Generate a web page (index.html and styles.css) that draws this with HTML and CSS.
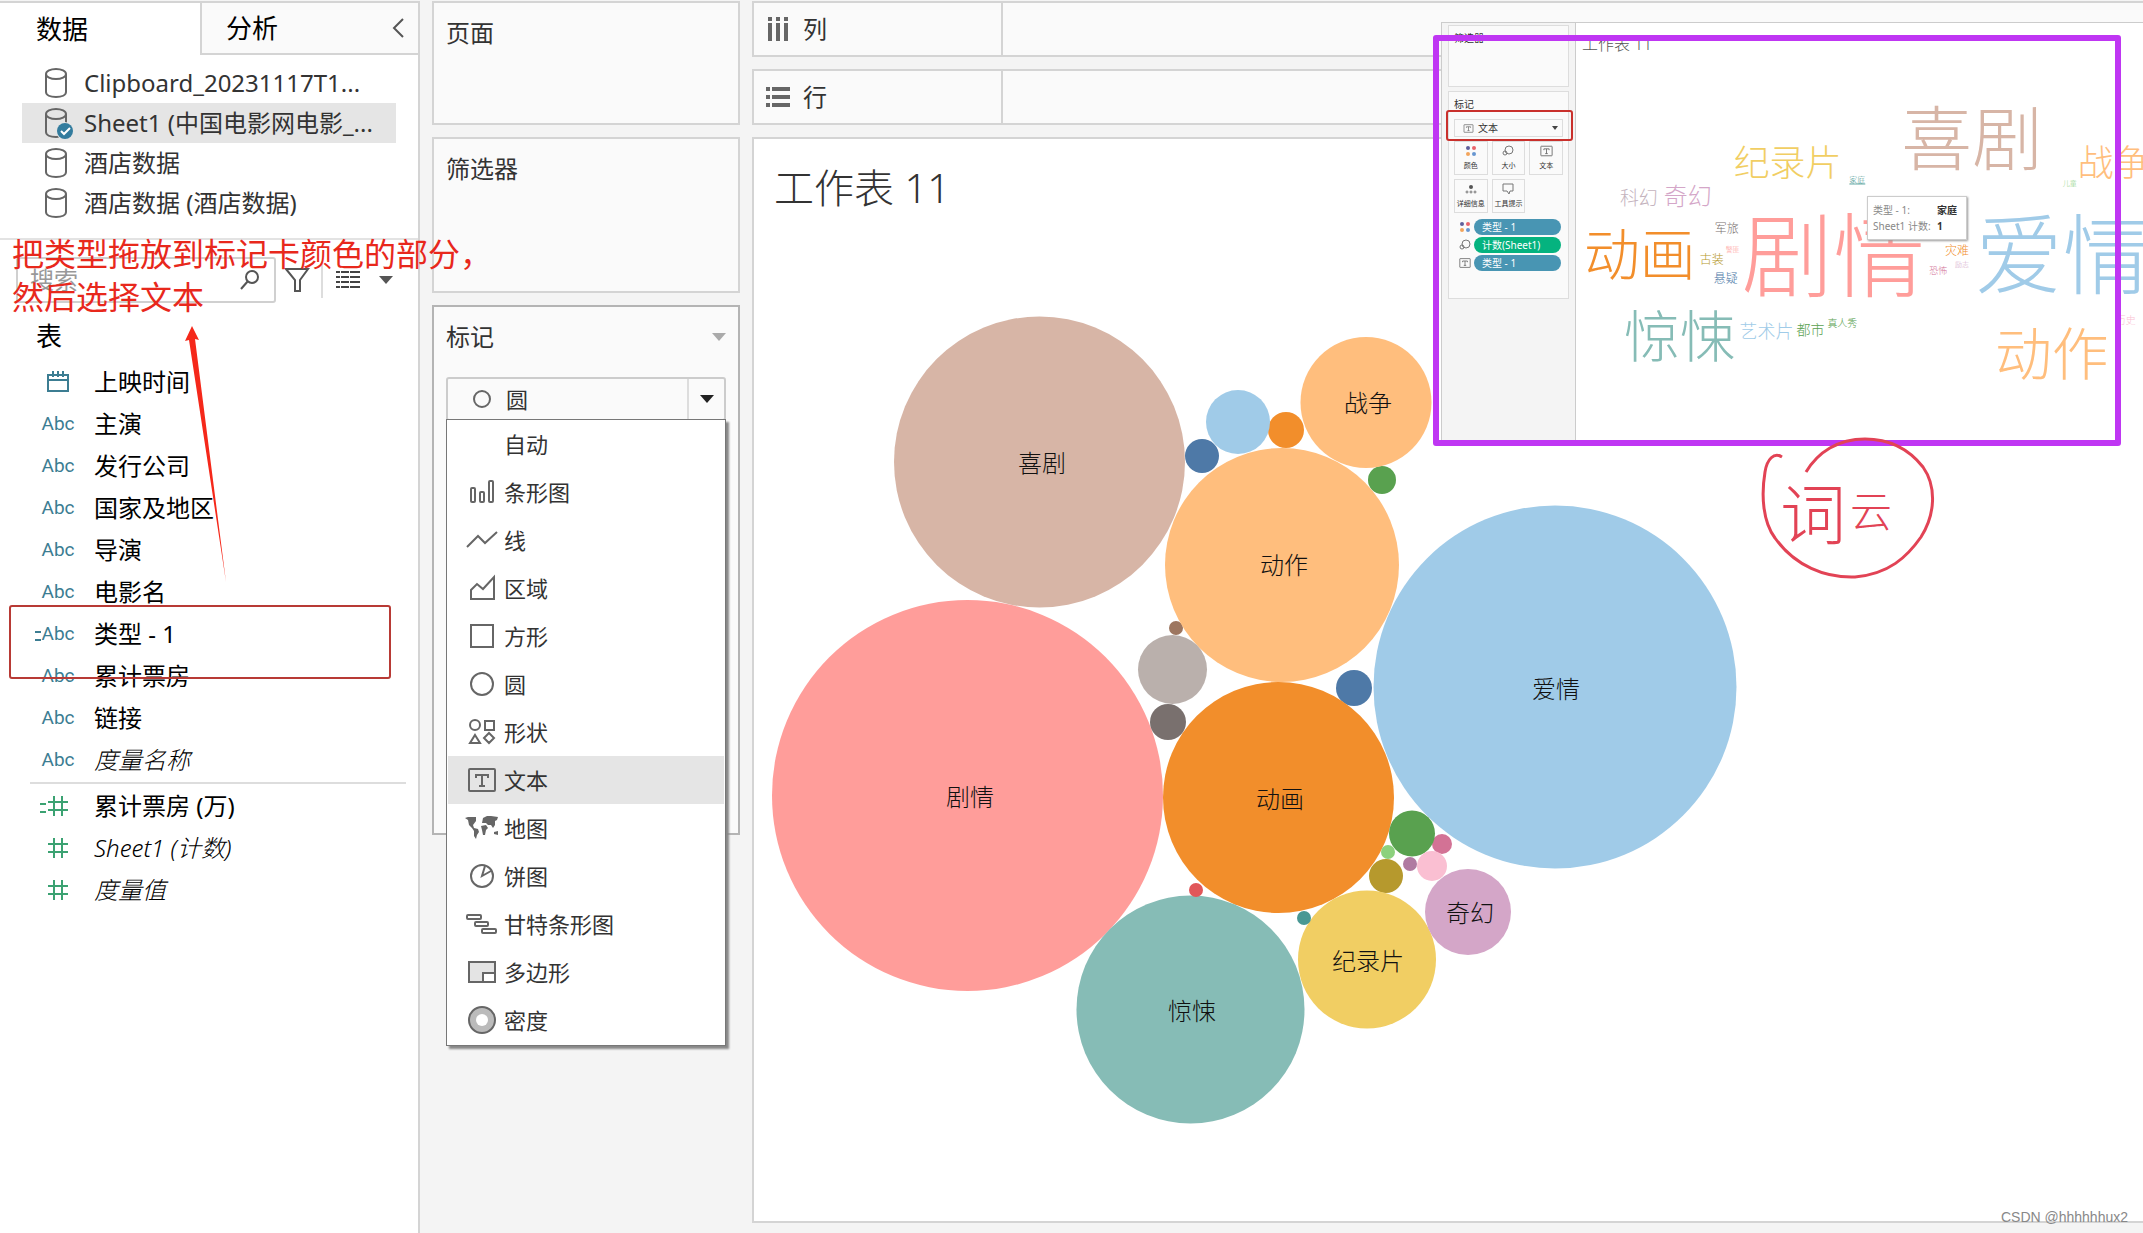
FILE: index.html
```html
<!DOCTYPE html>
<html lang="zh-CN">
<head>
<meta charset="utf-8">
<title>工作表 11</title>
<link rel="stylesheet" href="styles.css">
</head>
<body>
<svg class="defs" aria-hidden="true">
  <symbol id="db" viewBox="0 0 24 32"><g fill="none" stroke="#666" stroke-width="2"><ellipse cx="12" cy="7" rx="10" ry="5"/><path d="M2 7v18c0 3 4 5 10 5s10-2 10-5V7"/></g></symbol>
  <symbol id="hash" viewBox="0 0 20 20"><path d="M6 0v20M14 0v20M0 6h20M0 14h20" fill="none" stroke="#3ba272" stroke-width="2"/></symbol>
  <symbol id="tbox" viewBox="0 0 30 26"><rect x="2" y="2" width="26" height="22" rx="1" fill="none" stroke="#666" stroke-width="2"/><path d="M9 11V8h12v3M15 8v11M12 19h6" fill="none" stroke="#666" stroke-width="2"/></symbol>
  <symbol id="dots" viewBox="0 0 12 12"><circle cx="3" cy="3" r="2" fill="#5f5f9b"/><circle cx="9" cy="3" r="2" fill="#e8636a"/><circle cx="3" cy="9" r="2" fill="#f2a45c"/><circle cx="9" cy="9" r="2" fill="#6796d0"/></symbol>
  <symbol id="size" viewBox="0 0 12 12"><g fill="none" stroke="#777"><circle cx="7" cy="5" r="4"/><circle cx="3" cy="8" r="2"/></g></symbol>
</svg>

<div class="app">
  <aside class="data-pane">
    <div class="tabs">
      <button class="tab active" type="button">数据</button>
      <button class="tab" type="button">分析
        <svg width="12" height="20" viewBox="0 0 12 20"><path d="M11 1 2 10l9 9" fill="none" stroke="#555" stroke-width="2"/></svg>
      </button>
    </div>
    <ul class="sources">
      <li><svg width="24" height="32"><use href="#db"/></svg>Clipboard_20231117T1...</li>
      <li class="selected"><svg width="30" height="32"><use href="#db" width="24" height="32"/><circle cx="21" cy="24" r="9" fill="#e5e5e5"/><circle cx="21" cy="24" r="8" fill="#337c9e"/><path d="m17 24 3 3 6-6" fill="none" stroke="#fff" stroke-width="2"/></svg>Sheet1 (中国电影网电影_...</li>
      <li><svg width="24" height="32"><use href="#db"/></svg>酒店数据</li>
      <li><svg width="24" height="32"><use href="#db"/></svg>酒店数据 (酒店数据)</li>
    </ul>
    <div class="tools">
      <div class="search">
        <input type="text" placeholder="搜索" aria-label="搜索">
        <svg width="20" height="20" viewBox="0 0 20 20"><g fill="none" stroke="#555" stroke-width="2"><circle cx="12" cy="7" r="6"/><path d="m8 11-7 8"/></g></svg>
      </div>
      <button class="tool" type="button" aria-label="筛选"><svg width="26" height="26" viewBox="0 0 26 26"><path d="M2 2h22l-8 11v11h-5V13z" fill="none" stroke="#555" stroke-width="2"/></svg></button>
      <span class="rule"></span>
      <button class="tool" type="button" aria-label="视图"><svg width="60" height="20" viewBox="0 0 60 20"><path d="M1 2h24M1 7h24M1 12h24M1 17h24" stroke="#444" stroke-width="2"  stroke-dasharray="4 1 8 1 10 1"/><path d="M44 6h14l-7 8z" fill="#555"/></svg></button>
    </div>
    <h2 class="table-title">表</h2>
    <ul class="fields">
      <li><span class="kind"><svg width="24" height="22" viewBox="0 0 24 22"><path d="M2 4h20v16H2zM2 9h20M7 0v6M12 0v6M17 0v6" fill="none" stroke="#3c7d92" stroke-width="2"/></svg></span>上映时间</li>
      <li><span class="kind">Abc</span>主演</li>
      <li><span class="kind">Abc</span>发行公司</li>
      <li><span class="kind">Abc</span>国家及地区</li>
      <li><span class="kind">Abc</span>导演</li>
      <li><span class="kind">Abc</span>电影名</li>
      <li><span class="kind calc">Abc</span>类型 - 1</li>
      <li><span class="kind">Abc</span>累计票房</li>
      <li><span class="kind">Abc</span>链接</li>
      <li class="generated"><span class="kind">Abc</span>度量名称</li>
    </ul>
    <ul class="fields measures">
      <li><span class="kind calc"><svg width="20" height="20"><use href="#hash"/></svg></span>累计票房 (万)</li>
      <li class="generated"><span class="kind"><svg width="20" height="20"><use href="#hash"/></svg></span>Sheet1 (计数)</li>
      <li class="generated"><span class="kind"><svg width="20" height="20"><use href="#hash"/></svg></span>度量值</li>
    </ul>
  </aside>

  <section class="cards">
    <div class="card pages"><h3>页面</h3></div>
    <div class="card filters"><h3>筛选器</h3></div>
    <div class="card marks">
      <div class="card-head"><h3>标记</h3><svg width="14" height="8" viewBox="0 0 14 8"><path d="M0 0h14L7 8z" fill="#aaa"/></svg></div>
      <div class="mark-type">
        <select aria-label="标记类型"><option>圆</option></select>
        <svg class="mark-icon" width="20" height="20" viewBox="0 0 20 20"><circle cx="10" cy="10" r="8" fill="none" stroke="#666" stroke-width="2"/></svg>
        <span class="mark-arrow"><svg width="14" height="8" viewBox="0 0 14 8"><path d="M0 0h14L7 8z" fill="#222"/></svg></span>
        <ul class="menu">
          <li><svg></svg>自动</li>
          <li><svg viewBox="0 0 34 30"><g fill="none" stroke="#666" stroke-width="2"><rect x="6" y="11" width="4" height="14" rx="1"/><rect x="15" y="15" width="4" height="10" rx="1"/><rect x="24" y="4" width="4" height="21" rx="1"/></g></svg>条形图</li>
          <li><svg viewBox="0 0 34 30"><path d="M2 22 13 11l7 7L32 7" fill="none" stroke="#666" stroke-width="2"/></svg>线</li>
          <li><svg viewBox="0 0 34 30"><path d="M6 26V17l6-6 6 5L29 4v22z" fill="none" stroke="#666" stroke-width="2"/></svg>区域</li>
          <li><svg viewBox="0 0 34 30"><rect x="6" y="4" width="22" height="22" fill="none" stroke="#666" stroke-width="2"/></svg>方形</li>
          <li><svg viewBox="0 0 34 30"><circle cx="17" cy="15" r="11" fill="none" stroke="#666" stroke-width="2"/></svg>圆</li>
          <li><svg viewBox="0 0 34 30"><g fill="none" stroke="#666" stroke-width="2"><circle cx="10" cy="8" r="5"/><rect x="20" y="4" width="9" height="9"/><path d="m10 18 5 8H5zM24 16l5 5-5 5-5-5z"/></g></svg>形状</li>
          <li class="current"><svg viewBox="0 0 34 30"><use href="#tbox" x="2" y="2" width="30" height="26"/></svg>文本</li>
          <li><svg viewBox="0 0 34 30"><path d="M0 5 3 4l8 0 0 4-3 4 1 3 4 1 1 3-2 3-1 4-2-3 0-5-2-3-3-3-1-5zM18 5l4-2 4 0 7 1-1 3-2 1 0 4-2 3-2-3-3 0-2-2-4 0zM16 13l5-1 2 3-2 2-1 5-2 0-1-5zM29 19l4-1 0 4-4-1z" fill="#666"/></svg>地图</li>
          <li><svg viewBox="0 0 34 30"><g fill="none" stroke="#666" stroke-width="2"><circle cx="17" cy="15" r="11"/><path d="m20 5-3 10 9-5"/></g></svg>饼图</li>
          <li><svg viewBox="0 0 34 30"><g fill="none" stroke="#666" stroke-width="2"><rect x="2" y="6" width="14" height="4" rx="1"/><rect x="10" y="13" width="13" height="4" rx="1"/><rect x="17" y="20" width="14" height="4" rx="1"/></g></svg>甘特条形图</li>
          <li><svg viewBox="0 0 34 30"><path d="M4 5h26v20H4z" fill="#e4e4e4" stroke="#666" stroke-width="2"/><path d="M18 16h12v9H18z" fill="#fff" stroke="#666" stroke-width="2"/></svg>多边形</li>
          <li><svg viewBox="0 0 34 30"><circle cx="17" cy="15" r="13" fill="#bbb" stroke="#666" stroke-width="2"/><circle cx="17" cy="15" r="6" fill="#fff"/></svg>密度</li>
        </ul>
      </div>
    </div>
  </section>

  <main class="workspace">
    <div class="shelf"><div class="shelf-name"><svg width="24" height="24" viewBox="0 0 24 24"><path d="M4 0v4M12 0v4M20 0v4M4 6v18M12 6v18M20 6v18" stroke="#666" stroke-width="4"/></svg>列</div></div>
    <div class="shelf"><div class="shelf-name"><svg width="24" height="24" viewBox="0 0 24 24"><path d="M0 4h4M0 12h4M0 20h4M6 4h18M6 12h18M6 20h18" stroke="#666" stroke-width="4"/></svg>行</div></div>
    <div class="view">
      <h1>工作表 11</h1>
      <svg class="bubbles" viewBox="754 140 1389 1082" preserveAspectRatio="xMinYMin meet">
        <circle cx="1039.5" cy="463" r="145.5" fill="#d7b5a6"/>
        <circle cx="967.5" cy="796.5" r="195.5" fill="#ff9d9a"/>
        <circle cx="1286" cy="431" r="18" fill="#f28e2b"/>
        <circle cx="1238" cy="423" r="32" fill="#a0cbe8"/>
        <circle cx="1202" cy="457" r="17" fill="#4e79a7"/>
        <circle cx="1382" cy="481" r="14" fill="#59a14f"/>
        <circle cx="1366" cy="403.5" r="65.5" fill="#ffbe7d"/>
        <circle cx="1176" cy="629" r="7" fill="#9d7660"/>
        <circle cx="1282" cy="566" r="117" fill="#ffbe7d"/>
        <circle cx="1172.5" cy="670.5" r="34.5" fill="#bab0ac"/>
        <circle cx="1168" cy="723" r="18" fill="#79706e"/>
        <circle cx="1354" cy="689" r="18" fill="#4e79a7"/>
        <circle cx="1278.5" cy="798.5" r="115.5" fill="#f28e2b"/>
        <circle cx="1555" cy="688" r="181.5" fill="#a0cbe8"/>
        <circle cx="1190.5" cy="1010.5" r="114" fill="#86bcb6"/>
        <circle cx="1386" cy="877" r="17" fill="#b6992d"/>
        <circle cx="1367" cy="960.5" r="69" fill="#f1ce63"/>
        <circle cx="1442" cy="845" r="10" fill="#d37295"/>
        <circle cx="1412" cy="834.5" r="23" fill="#59a14f"/>
        <circle cx="1432" cy="867" r="15" fill="#fabfd2"/>
        <circle cx="1410" cy="865" r="7" fill="#b07aa1"/>
        <circle cx="1388" cy="853" r="7" fill="#8cd17d"/>
        <circle cx="1468" cy="913" r="43" fill="#d4a6c8"/>
        <circle cx="1196" cy="891" r="7" fill="#e15759"/>
        <circle cx="1304" cy="919" r="7" fill="#499894"/>
        <g class="bubble-label">
          <text x="1042" y="473">喜剧</text><text x="1368" y="413">战争</text>
          <text x="1284" y="575">动作</text><text x="970" y="807">剧情</text>
          <text x="1280" y="809">动画</text><text x="1556" y="699">爱情</text>
          <text x="1192" y="1021">惊悚</text><text x="1368" y="971">纪录片</text>
          <text x="1470" y="923">奇幻</text>
        </g>
      </svg>
    </div>
  </main>
</div>

<section class="inset">
  <div class="mini-side">
    <div class="mini-card mini-filters">筛选器</div>
    <div class="mini-card mini-marks">
      <span>标记</span>
      <div class="mini-type"><svg width="11" height="9"><use href="#tbox"/></svg><span>文本</span><svg class="mini-arrow" width="6" height="4" viewBox="0 0 6 4"><path d="M0 0h6L3 4z" fill="#444"/></svg></div>
      <div class="mini-grid">
        <button type="button"><svg width="12" height="12"><use href="#dots"/></svg>颜色</button>
        <button type="button"><svg width="12" height="12"><use href="#size"/></svg>大小</button>
        <button type="button"><svg width="13" height="12"><use href="#tbox"/></svg>文本</button>
        <button type="button"><svg width="12" height="12" viewBox="0 0 12 12"><circle cx="6" cy="4" r="2" fill="#555"/><g fill="none" stroke="#777"><circle cx="2" cy="9" r="1"/><circle cx="6" cy="9" r="1"/><circle cx="10" cy="9" r="1"/></g></svg>详细信息</button>
        <button type="button"><svg width="12" height="12" viewBox="0 0 12 12"><path d="M1 1h10v7H8l-1 3-2-3H1z" fill="none" stroke="#777"/></svg>工具提示</button>
      </div>
      <ul class="pills">
        <li><svg width="12" height="12"><use href="#dots"/></svg><span class="pill">类型 - 1</span></li>
        <li><svg width="12" height="12"><use href="#size"/></svg><span class="pill measure">计数(Sheet1)</span></li>
        <li><svg width="12" height="12"><use href="#tbox"/></svg><span class="pill">类型 - 1</span></li>
      </ul>
    </div>
  </div>
  <div class="cloud">
    <svg viewBox="1576 24 567 422" preserveAspectRatio="xMinYMin meet">
      <text x="1582" y="51" font-size="16" fill="#555">工作表 11</text>
      <text x="1902" y="166" font-size="71" fill="#d7b5a6">喜剧</text>
      <text x="1734" y="177" font-size="36" fill="#f1ce63">纪录片</text>
      <text x="1850" y="184" font-size="8" fill="#499894" text-decoration="underline">家庭</text>
      <text x="2064" y="187" font-size="7" fill="#8cd17d">儿童</text>
      <text x="2079" y="177" font-size="36" fill="#ffbe7d">战争</text>
      <text x="1620" y="206" font-size="19" fill="#c4b3bd">科幻</text>
      <text x="1664" y="206" font-size="24" fill="#d4a6c8">奇幻</text>
      <text x="1584" y="277" font-size="56" fill="#f28e2b">动画</text>
      <text x="1715" y="235" font-size="12" fill="#79706e">军旅</text>
      <text x="1726" y="254" font-size="7" fill="#ff9d9a">警匪</text>
      <text x="1700" y="266" font-size="12" fill="#b6992d">古装</text>
      <text x="1714" y="285" font-size="12" fill="#4e79a7">悬疑</text>
      <text x="1742" y="292" font-size="92" fill="#ff9d9a">剧情</text>
      <text x="1624" y="359" font-size="56" fill="#86bcb6">惊悚</text>
      <text x="1740" y="340" font-size="18" fill="#a0cbe8">艺术片</text>
      <text x="1797" y="337" font-size="14" fill="#59a14f">都市</text>
      <text x="1828" y="329" font-size="10" fill="#59a14f">真人秀</text>
      <text x="1946" y="257" font-size="12" fill="#f28e2b">灾难</text>
      <text x="1930" y="276" font-size="9" fill="#d37295">恐怖</text>
      <text x="1956" y="269" font-size="7" fill="#d4a6c8">励志</text>
      <text x="1976" y="289" font-size="88" fill="#a0cbe8">爱情</text>
      <text x="2117" y="326" font-size="10" fill="#fabfd2">历史</text>
      <text x="1996" y="377" font-size="57" fill="#ffbe7d">动作</text>
    </svg>
    <dl class="tip"><dt>类型 - 1:</dt><dd>家庭</dd><dt>Sheet1 计数:</dt><dd>1</dd></dl>
  </div>
</section>
<div class="frame inset-frame"></div>
<div class="frame type-frame"></div>
<div class="frame field-frame"></div>
<p class="note">把类型拖放到标记卡颜色的部分，<br>然后选择文本</p>
<svg class="arrow" width="50" height="260" viewBox="0 0 50 260"><path d="m12 0 7 14-4-1 31 243L9 14l-4 1z" fill="#f5281a"/></svg>
<svg class="scribble" width="220" height="160" viewBox="0 0 220 160">
  <path d="M42 27c-8-5-15 2-17 15-4 24-2 50 10 66 20 28 50 40 80 39 34-3 52-20 66-40 14-22 16-50 2-70C168 18 148 9 125 9 98 9 78 22 66 42" fill="none" stroke="#e24355" stroke-width="3"/>
  <text x="40" y="109" font-size="66">词</text><text x="110" y="97" font-size="42">云</text>
</svg>
<span class="credit">CSDN @hhhhhhux2</span>
</body>
</html>
```

FILE: styles.css
```css
* { box-sizing: border-box; }
body {
  position: relative;
  margin: 0;
  overflow: hidden;
  background: #f4f4f4;
  color: #333;
  font: 24px/32px "Noto Sans", "Noto Sans CJK SC", sans-serif;
}
ul, h1, h2, h3, p, dl, dd { margin: 0; padding: 0; list-style: none; font-weight: 400; }
h3 { font-size: 24px; }
button { font: inherit; color: inherit; background: none; border: 0; padding: 0; }
svg { display: block; flex: none; }
.defs { position: absolute; width: 0; height: 0; }

.app {
  display: flex;
  gap: 12px;
  min-height: 100vh;
  padding-top: 1px;
}

/* data pane */
.data-pane {
  flex: 0 0 420px;
  background: #fff;
  border-top: 2px solid #d4d4d4;
  border-right: 2px solid #d4d4d4;
  color: #000;
}
.tabs { display: flex; height: 52px; font-size: 26px; }
.tab { width: 200px; padding-left: 36px; text-align: left; }
.tab:not(.active) {
  display: flex;
  flex: 1;
  align-items: center;
  justify-content: space-between;
  padding: 0 14px 0 24px;
  background: #fafafa;
  border-left: 2px solid #d4d4d4;
  border-bottom: 2px solid #d4d4d4;
}
.sources {
  padding: 8px 22px 14px;
  height: 185px;
  border-bottom: 2px solid #e3e3e3;
  color: #333;
}
.sources li {
  position: relative;
  display: grid;
  grid-template-columns: 40px 1fr;
  align-items: center;
  height: 40px;
  padding-left: 22px;
  white-space: nowrap;
}
.sources .selected { background: #e5e5e5; }
.tools { display: flex; align-items: center; padding: 17px 16px 0; }
.search {
  display: flex;
  align-items: center;
  width: 260px;
  height: 46px;
  padding: 0 14px 0 12px;
  border: 2px solid #d0d0d0;
  border-radius: 3px;
}
.search input {
  flex: 1;
  min-width: 0;
  padding: 0;
  border: 0;
  background: none;
  font: inherit;
}
.search input::placeholder { color: #999; opacity: 1; }
.tool { margin-left: 8px; }
.rule { width: 2px; height: 36px; margin: 0 4px 0 11px; background: #ddd; }
.table-title { padding: 17px 36px 0; height: 58px; font-size: 26px; }
.fields li {
  display: flex;
  align-items: center;
  height: 42px;
  white-space: pre;
}
.kind {
  position: relative;
  display: flex;
  justify-content: center;
  flex: none;
  width: 32px;
  margin: 0 20px 0 42px;
  color: #3c7d92;
  font-family: Roboto, sans-serif;
  font-size: 19px;
}
.calc::before {
  content: "";
  position: absolute;
  left: -7px;
  top: 50%;
  width: 6px;
  height: 6px;
  margin-top: -3px;
  border: solid currentColor;
  border-width: 2px 0;
}
.measures .calc::before { left: -2px; }
.measures { position: relative; padding-top: 4px; }
.measures::before {
  content: "";
  position: absolute;
  top: 1px;
  left: 30px;
  right: 12px;
  height: 2px;
  background: #ddd;
}
.measures .kind { color: #3ba272; }
.generated { font-style: italic; font-weight: 300; }
.generated .kind { font-style: normal; font-weight: 400; }

/* cards */
.cards { flex: 0 0 308px; display: flex; flex-direction: column; gap: 12px; }
.card { padding: 14px 12px; background: #fafafa; border: 2px solid #d4d4d4; }
.pages { height: 124px; }
.filters { height: 156px; }
.marks { height: 530px; border-color: #b4b4b4; }
.card-head { display: flex; align-items: center; justify-content: space-between; height: 32px; }
.mark-type { position: relative; margin-top: 24px; }
.mark-type select {
  display: block;
  width: 100%;
  height: 44px;
  padding: 0 58px;
  border: 2px solid #ccc;
  border-radius: 3px;
  background: #fafafa;
  color: #333;
  font: inherit;
  font-size: 22px;
  appearance: none;
}
.mark-icon { position: absolute; left: 26px; top: 12px; }
.mark-arrow {
  position: absolute;
  right: 2px;
  top: 2px;
  display: grid;
  place-items: center;
  width: 37px;
  height: 40px;
  border-left: 2px solid #ddd;
}
.menu {
  position: absolute;
  top: 42px;
  left: 0;
  right: 0;
  padding: 0 1px 1px;
  background: #fff;
  border: 1px solid #777;
  box-shadow: 3px 3px 2px #888;
  font-size: 22px;
}
.menu li { display: flex; align-items: center; gap: 5px; height: 48px; padding-left: 17px; }
.menu svg { width: 34px; height: 30px; }
.menu .current { background: #e5e5e5; }

/* shelves and view */
.workspace { flex: 1; min-width: 0; display: flex; flex-direction: column; gap: 12px; padding-bottom: 10px; }
.shelf { height: 56px; background: #fafafa; border: 2px solid #d4d4d4; border-right: 0; }
.shelf-name {
  display: flex;
  align-items: center;
  gap: 13px;
  width: 249px;
  height: 100%;
  padding-left: 12px;
  border-right: 2px solid #d4d4d4;
}
.view {
  display: grid;
  flex: 1;
  min-height: 0;
  background: #fff;
  border: 2px solid #d4d4d4;
  border-right: 0;
}
.view > * { grid-area: 1 / 1; }
.view h1 { padding: 23px 20px; font-size: 40px; line-height: 52px; font-weight: 300; }
.bubbles { width: 100%; height: 100%; }
.bubble-label { font-size: 24px; font-weight: 300; text-anchor: middle; fill: #111; }

/* pasted word-cloud picture */
.inset {
  position: absolute;
  left: 1441px;
  right: 0;
  top: 22px;
  display: flex;
  height: 422px;
  overflow: hidden;
  background: #fff;
  border-top: 1px solid #ccc;
  font-size: 10px;
  line-height: 16px;
}
.mini-side {
  flex: 0 0 135px;
  padding: 2px 6px;
  background: #f4f4f4;
  border: solid #ccc;
  border-width: 0 1px;
}
.mini-card { padding: 4px 5px; background: #fafafa; border: 1px solid #ddd; }
.mini-filters { height: 62px; margin-bottom: 4px; }
.mini-marks { height: 208px; }
.mini-type {
  display: flex;
  align-items: center;
  gap: 4px;
  height: 18px;
  margin: 7px 0 4px;
  padding: 0 4px 0 8px;
  border: 1px solid #ddd;
}
.mini-arrow { margin-left: auto; }
.mini-grid { display: grid; grid-template-columns: repeat(3, 1fr); gap: 4px; }
.mini-grid button {
  display: flex;
  flex-direction: column;
  align-items: center;
  justify-content: center;
  gap: 3px;
  height: 34px;
  border: 1px solid #ddd;
  font-size: 7px;
  line-height: 11px;
  white-space: nowrap;
}
.pills { padding: 5px 2px 0 5px; }
.pills li { display: flex; align-items: center; gap: 3px; height: 18px; }
.pill {
  flex: 1;
  height: 16px;
  padding-left: 8px;
  border-radius: 8px;
  background: #4895b3;
  color: #fff;
}
.measure { background: #05b37f; }
.cloud { position: relative; flex: 1; min-width: 0; }
.cloud > svg { width: 100%; height: 100%; font-weight: 300; }
.tip {
  position: absolute;
  left: 291px;
  top: 173px;
  display: grid;
  grid-template-columns: 64px 1fr;
  width: 100px;
  padding: 5px;
  background: #fff;
  border: 1px solid #ccc;
  box-shadow: 1px 1px 2px #999;
  color: #888;
  white-space: nowrap;
}
.tip dd { color: #333; font-weight: 700; }

/* annotations */
.frame { position: absolute; border-radius: 3px; }
.inset-frame { left: 1433px; top: 35px; width: 688px; height: 411px; border: 6px solid #bf36f3; }
.type-frame { left: 1446px; top: 110px; width: 127px; height: 31px; border: 2px solid #c9302c; }
.field-frame { left: 9px; top: 605px; width: 382px; height: 74px; border: 2px solid #b83a35; }
.note {
  position: absolute;
  left: 12px;
  top: 232px;
  color: #e8281c;
  font-size: 32px;
  line-height: 43px;
  white-space: nowrap;
}
.arrow { position: absolute; left: 180px; top: 326px; }
.scribble { position: absolute; left: 1740px; top: 430px; fill: #e24355; font-weight: 300; }
.credit {
  position: absolute;
  right: 15px;
  bottom: 8px;
  color: #888;
  font: 14px/16px "Liberation Sans", sans-serif;
}
```
